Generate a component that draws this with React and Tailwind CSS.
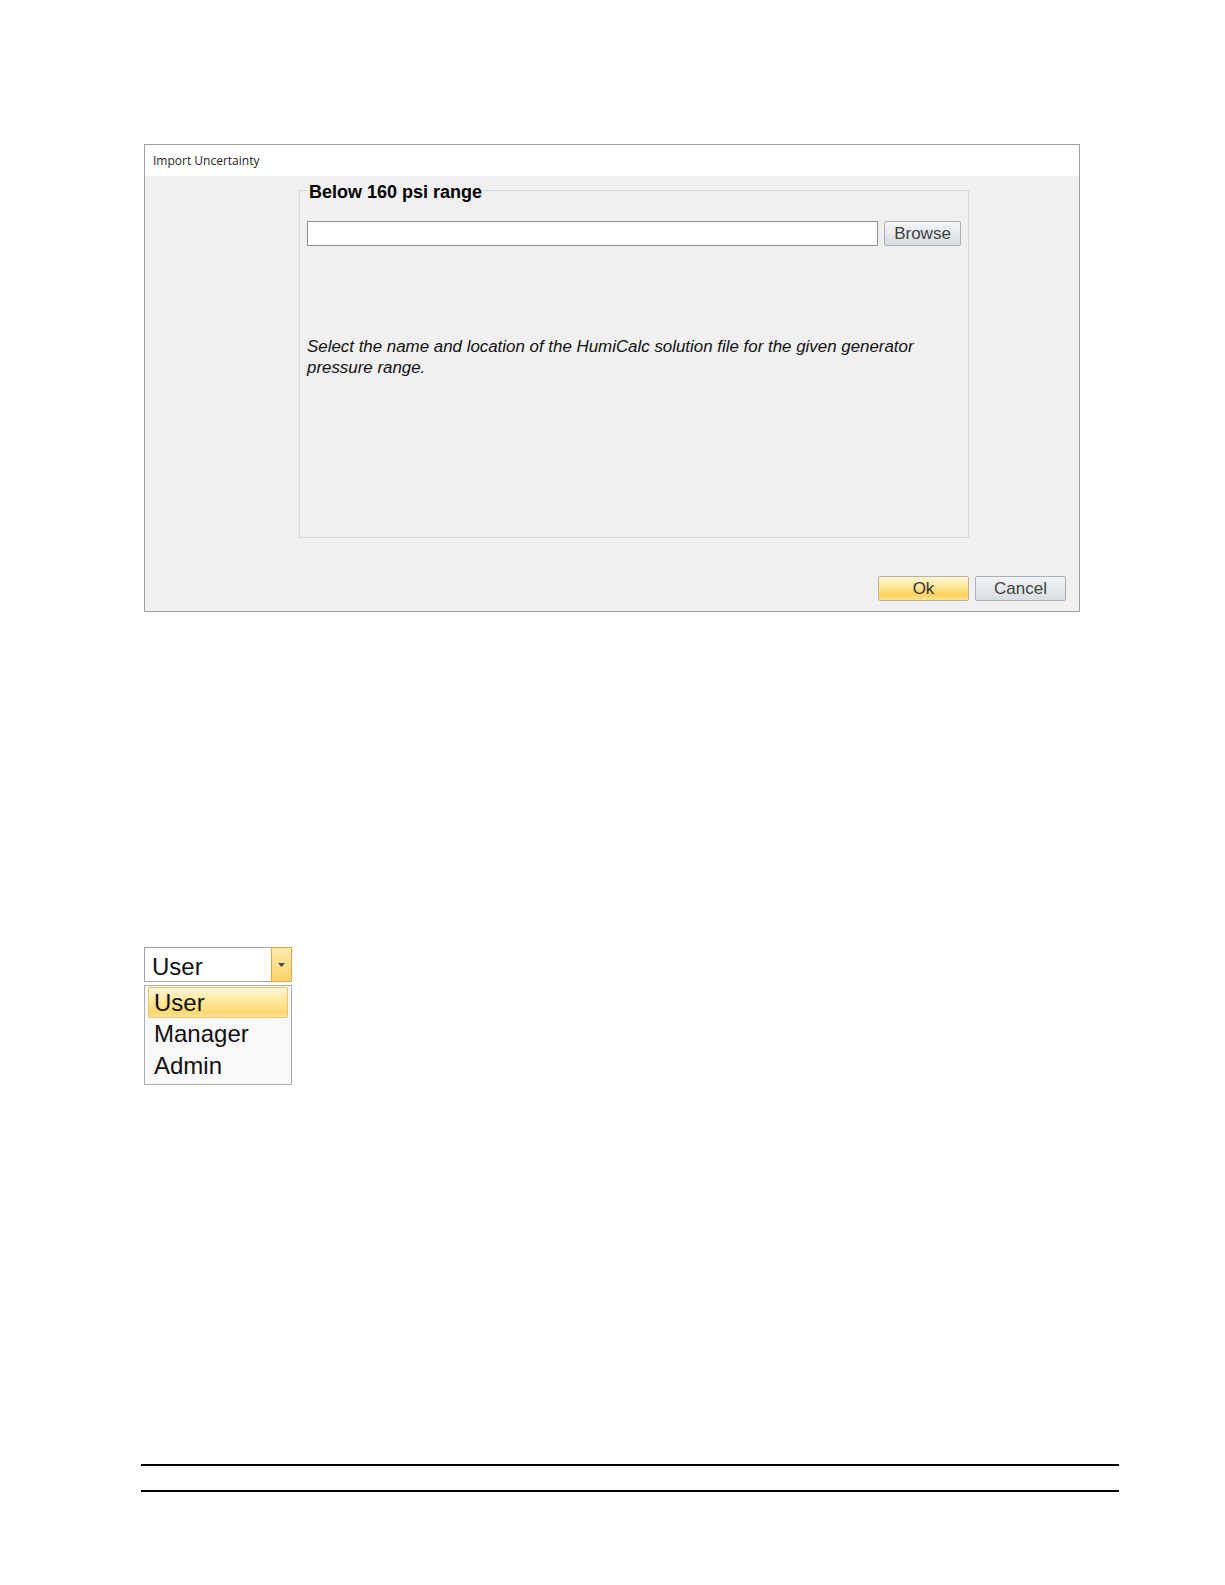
// App.jsx - Import Uncertainty dialog + role dropdown
export default function App() {
  const btnGray =
    "h-[25px] rounded-[2px] border border-[#a9b1b7] bg-[linear-gradient(to_bottom,#f3f5f6_0%,#e6eaed_50%,#d7dee2_100%)] text-[17px] leading-[23px] text-[#404040] font-['Liberation_Sans',Arial,sans-serif]";

  return (
    <div className="min-h-[1585px] bg-white pt-[144px] font-['Liberation_Sans',Arial,sans-serif]">
      {/* DIALOGO */}
      <div className="ml-[144px] flex h-[468px] w-[936px] flex-col border border-[#a0a0a0] bg-[#f0f0f0]">
        <div className="flex h-[31px] items-center bg-white pl-[8px] font-['Open_Sans',sans-serif] text-[12px] text-[#1e1e1e]">
          Import Uncertainty
        </div>

        <div className="flex flex-1 flex-col pt-[2px]">
          <fieldset className="ml-[154px] w-[670px] border border-[#d7d7d7] px-[7px]">
            <legend className="px-[2px] pt-[4px] text-[18px] leading-[21px] font-bold text-black">
              Below 160 psi range
            </legend>
            <div className="h-[316px]">
              <div className="mt-[18px] flex gap-[6px]">
                <input
                  className="h-[25px] flex-1 border border-[#8f8f8f] bg-white px-1 text-[14px] outline-none"
                  defaultValue=""
                />
                <button className={btnGray + " w-[77px]"}>Browse</button>
              </div>
              <p className="mt-[90px] text-[16.9px] leading-[21px] italic text-[#111]">
                Select the name and location of the HumiCalc solution file for the given generator
                <br />
                pressure range.
              </p>
            </div>
          </fieldset>

          <div className="mt-auto flex justify-end gap-[6px] pr-[13px] pb-[10px]">
            <button className="h-[25px] w-[91px] rounded-[2px] border border-[#b7b3a4] bg-[linear-gradient(to_bottom,#fff6d2_0%,#ffe89e_40%,#fdd25c_78%,#fde49a_100%)] text-[17px] leading-[23px] text-[#333]">
              Ok
            </button>
            <button className={btnGray + " w-[91px]"}>Cancel</button>
          </div>
        </div>
      </div>

      {/* COMBO DE ROLES */}
      <div className="mt-[335px] ml-[144px] w-[148px]">
        <div className="flex h-[35px] border border-[#a2a2a2] bg-white">
          <div className="flex-1 pt-[5px] pl-[7px] text-[24px] leading-[28px] text-[#111]">User</div>
          <div className="-my-px -mr-px flex w-[21px] items-center justify-center border border-[#e2a646] bg-[linear-gradient(to_bottom,#feecae_0%,#fddc83_60%,#fcd46b_100%)]">
            <svg width="7" height="4" viewBox="0 0 7 4">
              <path d="M0 0h7L3.5 4z" fill="#4a4a4a" />
            </svg>
          </div>
        </div>
        <div className="mt-[3px] h-[100px] border border-[#aeaeae] bg-[#f8f8f8] px-[3px] pt-[1px] text-[24px] text-[#111]">
          <div className="h-[31px] rounded-[2px] border border-[#e6c46a] bg-[linear-gradient(to_bottom,#fff7d9_0%,#ffe79c_45%,#fdd870_85%,#fde4a0_100%)] pl-[5px] leading-[29px]">
            User
          </div>
          <div className="h-[31.5px] pl-[6px] leading-[31.5px]">Manager</div>
          <div className="h-[31.5px] pl-[6px] leading-[31.5px]">Admin</div>
        </div>
      </div>

      {/* LINEAS DE PIE */}
      <div className="mt-[379px] ml-[141px] h-[2px] w-[978px] bg-black" />
      <div className="mt-[24px] ml-[141px] h-[2px] w-[978px] bg-black" />
    </div>
  );
}
